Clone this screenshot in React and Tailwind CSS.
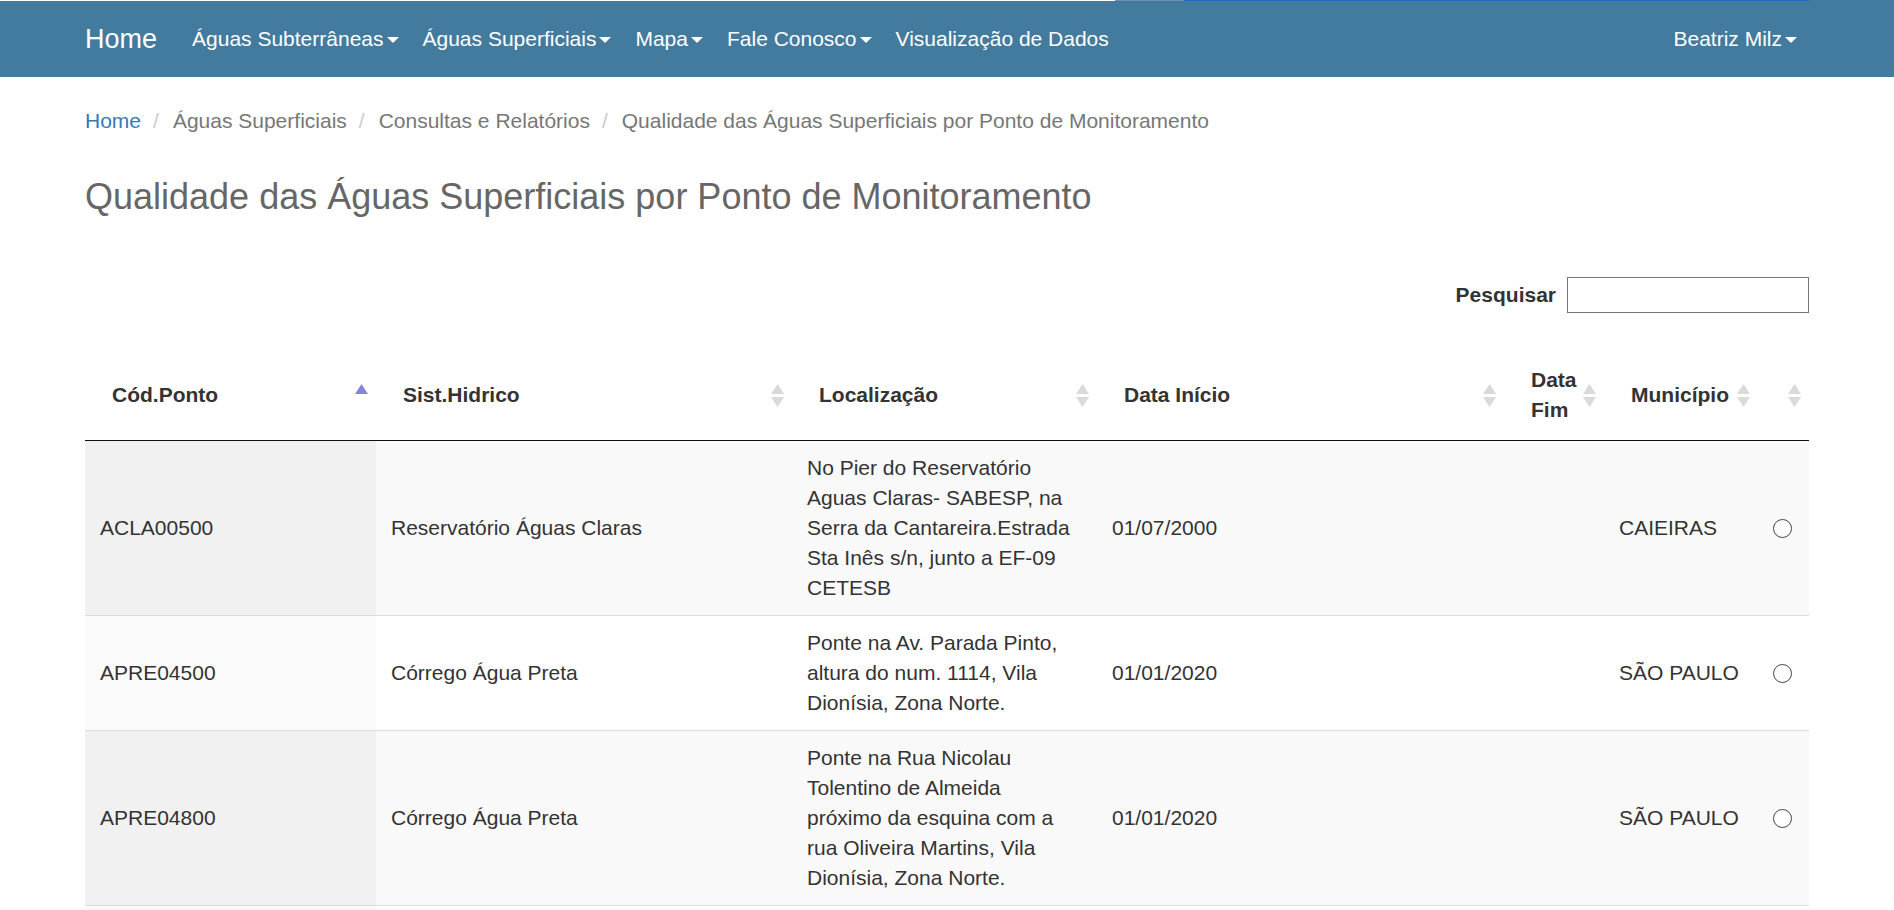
import React from 'react';

const navItems = [
  { label: 'Águas Subterrâneas', caret: true },
  { label: 'Águas Superficiais', caret: true },
  { label: 'Mapa', caret: true },
  { label: 'Fale Conosco', caret: true },
  { label: 'Visualização de Dados', caret: false },
];

const columns = [
  { label: 'Cód.Ponto', width: 'w-[291px]', sort: 'asc' },
  { label: 'Sist.Hidrico', width: 'w-[416px]', sort: 'both' },
  { label: 'Localização', width: 'w-[305px]', sort: 'both' },
  { label: 'Data Início', width: 'w-[407px]', sort: 'both' },
  { label: 'Data Fim', width: 'w-[100px]', sort: 'both' },
  { label: 'Município', width: 'w-[154px]', sort: 'both' },
  { label: '', width: 'w-[51px]', sort: 'both' },
];

const rows = [
  {
    cod: 'ACLA00500',
    sist: 'Reservatório Águas Claras',
    local: 'No Pier do Reservatório Aguas Claras- SABESP, na Serra da Cantareira.Estrada Sta Inês s/n, junto a EF-09 CETESB',
    inicio: '01/07/2000',
    fim: '',
    municipio: 'CAIEIRAS',
  },
  {
    cod: 'APRE04500',
    sist: 'Córrego Água Preta',
    local: 'Ponte na Av. Parada Pinto, altura do num. 1114, Vila Dionísia, Zona Norte.',
    inicio: '01/01/2020',
    fim: '',
    municipio: 'SÃO PAULO',
  },
  {
    cod: 'APRE04800',
    sist: 'Córrego Água Preta',
    local: 'Ponte na Rua Nicolau Tolentino de Almeida próximo da esquina com a rua Oliveira Martins, Vila Dionísia, Zona Norte.',
    inicio: '01/01/2020',
    fim: '',
    municipio: 'SÃO PAULO',
  },
];

function Caret() {
  return (
    <span className="inline-block w-0 h-0 ml-[3px] align-middle border-t-[6px] border-t-white border-x-[6px] border-x-transparent" />
  );
}

function SortIcon({ type }) {
  if (type === 'asc') {
    return (
      <svg width="13" height="23" viewBox="0 0 13 23" className="shrink-0">
        <polygon points="6.5,0 13,10 0,10" fill="#8484dc" />
      </svg>
    );
  }
  return (
    <svg width="13" height="23" viewBox="0 0 13 23" className="shrink-0">
      <polygon points="6.5,0 13,10 0,10" fill="#dadada" />
      <polygon points="0,13 13,13 6.5,23" fill="#dadada" />
    </svg>
  );
}

export default function App() {
  return (
    <div className="min-h-screen bg-white font-['Liberation_Sans',Arial,sans-serif] text-[#333]">
      {/* thin strip on top */}
      <div className="flex h-px">
        <div className="w-[1115px] bg-white" />
        <div className="w-[69px] bg-[#6d8fb0]" />
        <div className="w-[625px] bg-[#1d6cbf]" />
        <div className="flex-1 bg-[#437b9e]" />
      </div>

      {/* Navbar */}
      <nav className="h-[76px] bg-[#437b9e] px-[85px] flex items-center justify-between text-white">
        <div className="flex items-center">
          <span className="text-[27px] leading-[30px] pr-[23px]">Home</span>
          {navItems.map((item) => (
            <span key={item.label} className="px-[12px] text-[21px] leading-[30px] whitespace-nowrap">
              {item.label}
              {item.caret && <Caret />}
            </span>
          ))}
        </div>
        <span className="pl-[12px] pr-[12px] text-[21px] leading-[30px] whitespace-nowrap">
          Beatriz Milz
          <Caret />
        </span>
      </nav>

      <main className="px-[85px]">
        {/* Breadcrumb */}
        <div className="mt-[29px] h-[30px] flex items-center text-[21px] leading-[30px] text-[#777]">
          <span className="text-[#337ab7]">Home</span>
          {['Águas Superficiais', 'Consultas e Relatórios', 'Qualidade das Águas Superficiais por Ponto de Monitoramento'].map((c) => (
            <React.Fragment key={c}>
              <span className="text-[#ccc] px-[12px]">/</span>
              <span className="ml-[2px]">{c}</span>
            </React.Fragment>
          ))}
        </div>

        {/* Title */}
        <h3 className="mt-[41px] text-[36px] leading-[40px] text-[#666]">
          Qualidade das Águas Superficiais por Ponto de Monitoramento
        </h3>

        {/* Search */}
        <div className="mt-[60px] flex items-center justify-end">
          <label className="text-[21px] font-bold mr-[11px]">Pesquisar</label>
          <input className="w-[242px] h-[36px] border border-[#767676] px-[4px] text-[21px] outline-none" />
        </div>

        {/* Table */}
        <table className="mt-[37px] w-full table-fixed border-separate border-spacing-0 text-[21px] leading-[30px]">
          <colgroup>
            {columns.map((c, i) => (
              <col key={i} className={c.width} />
            ))}
          </colgroup>
          <thead>
            <tr>
              {columns.map((c, i) => (
                <th key={i} className="py-[15px] pl-[27px] pr-[8px] text-left align-middle font-bold border-b border-[#111]">
                  <div className="flex items-center justify-between">
                    <span>{c.label}</span>
                    <SortIcon type={c.sort} />
                  </div>
                </th>
              ))}
            </tr>
          </thead>
          <tbody>
            {rows.map((r, i) => {
              const odd = i % 2 === 0;
              const rowBg = odd ? 'bg-[#f9f9f9]' : 'bg-white';
              const sortedBg = odd ? 'bg-[#f1f1f1]' : 'bg-[#fafafa]';
              const border = i === 0 ? '' : 'border-t border-[#ddd]';
              const cell = `px-[15px] py-[12px] align-middle ${border}`;
              return (
                <tr key={r.cod}>
                  <td className={`${cell} ${sortedBg}`}>{r.cod}</td>
                  <td className={`${cell} ${rowBg}`}>{r.sist}</td>
                  <td className={`${cell} ${rowBg} pr-[21px]`}>{r.local}</td>
                  <td className={`${cell} ${rowBg}`}>{r.inicio}</td>
                  <td className={`${cell} ${rowBg}`}>{r.fim}</td>
                  <td className={`${cell} ${rowBg} whitespace-nowrap`}>{r.municipio}</td>
                  <td className={`${cell} ${rowBg}`}>
                    <span className="block w-[19px] h-[19px] rounded-full border border-[#444] bg-white" />
                  </td>
                </tr>
              );
            })}
            {/* next row, starting just at the bottom edge */}
            <tr>
              <td className="h-[114px] border-t border-[#ddd] bg-[#fafafa]" />
              <td className="border-t border-[#ddd] bg-white" />
              <td className="border-t border-[#ddd] bg-white" />
              <td className="border-t border-[#ddd] bg-white" />
              <td className="border-t border-[#ddd] bg-white" />
              <td className="border-t border-[#ddd] bg-white" />
              <td className="border-t border-[#ddd] bg-white" />
            </tr>
          </tbody>
        </table>
      </main>
    </div>
  );
}
